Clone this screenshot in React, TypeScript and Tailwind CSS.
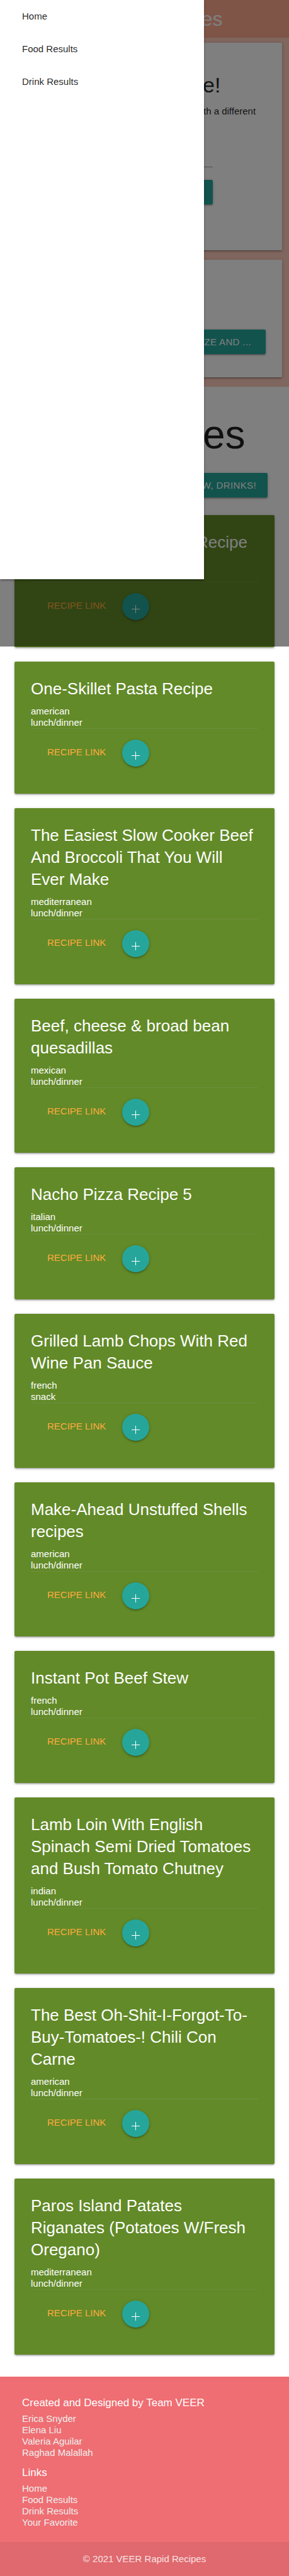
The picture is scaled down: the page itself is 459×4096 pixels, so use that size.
import { Menu } from "lucide-react";

type Recipe = { title: string; cuisine: string; meal: string };

const recipes: Recipe[] = [
  { title: "Easy Cheese Chicken Recipe", cuisine: "american", meal: "lunch/dinner" },
  { title: "One-Skillet Pasta Recipe", cuisine: "american", meal: "lunch/dinner" },
  { title: "The Easiest Slow Cooker Beef And Broccoli That You Will Ever Make", cuisine: "mediterranean", meal: "lunch/dinner" },
  { title: "Beef, cheese & broad bean quesadillas", cuisine: "mexican", meal: "lunch/dinner" },
  { title: "Nacho Pizza Recipe 5", cuisine: "italian", meal: "lunch/dinner" },
  { title: "Grilled Lamb Chops With Red Wine Pan Sauce", cuisine: "french", meal: "snack" },
  { title: "Make-Ahead Unstuffed Shells recipes", cuisine: "american", meal: "lunch/dinner" },
  { title: "Instant Pot Beef Stew", cuisine: "french", meal: "lunch/dinner" },
  { title: "Lamb Loin With English Spinach Semi Dried Tomatoes and Bush Tomato Chutney", cuisine: "indian", meal: "lunch/dinner" },
  { title: "The Best Oh-Shit-I-Forgot-To-Buy-Tomatoes-! Chili Con Carne", cuisine: "american", meal: "lunch/dinner" },
  { title: "Paros Island Patates Riganates (Potatoes W/Fresh Oregano)", cuisine: "mediterranean", meal: "lunch/dinner" },
];

const team = ["Erica Snyder", "Elena Liu", "Valeria Aguilar", "Raghad Malallah"];
const footerLinks = ["Home", "Food Results", "Drink Results", "Your Favorite"];
const navLinks = ["Home", "Food Results", "Drink Results"];

const raised =
  "shadow-[0_2px_2px_0_rgba(0,0,0,0.14),0_3px_1px_-2px_rgba(0,0,0,0.12),0_1px_5px_0_rgba(0,0,0,0.2)]";
const button = `h-[39px] rounded-xs bg-[#26a69a] tracking-wide text-white uppercase ${raised}`;

function PlusIcon() {
  return (
    <svg viewBox="0 0 13 13" className="size-[13px]" stroke="white" strokeWidth="1" aria-hidden="true">
      <path d="M0 6.5H13M6.5 0V13" />
    </svg>
  );
}

function RecipeCard({ recipe }: { recipe: Recipe }) {
  return (
    <article className={`rounded-xs bg-[#628a28] p-[26px] text-white ${raised}`}>
      <h2 className="mb-[9px] text-[26px] leading-[35px]">{recipe.title}</h2>
      <p>{recipe.cuisine}</p>
      <p>{recipe.meal}</p>
      <div className="flex gap-[26px] border-t border-[#a0a0a0]/20 py-[17px] pl-[26px]">
        <a href="#recipe" className="leading-[39px] text-[#ffab40] uppercase">
          Recipe Link
        </a>
        <button
          type="button"
          aria-label={`Save ${recipe.title}`}
          className={`flex size-[43px] items-center justify-center rounded-full bg-[#26a69a] pt-2 ${raised}`}
        >
          <PlusIcon />
        </button>
      </div>
    </article>
  );
}

function LinkList({ items }: { items: string[] }) {
  return (
    <ul className="text-[#eeeeee]">
      {items.map((item) => (
        <li key={item}>
          <a href="#top">{item}</a>
        </li>
      ))}
    </ul>
  );
}

export default function App() {
  return (
    <div className="relative bg-white font-['Liberation_Sans',Arial,sans-serif] text-[15px] leading-[18px] text-black/87">
      <header className="flex h-[60px] items-center bg-[#ffab91] text-white">
        <button type="button" aria-label="Open menu" className="flex w-10 justify-center">
          <Menu className="size-5" />
        </button>
        <h1 className="flex-1 text-center text-[32px] leading-[36px]">Rapid Recipes</h1>
      </header>

      <section className="flex flex-col gap-[15px] bg-[#ffccbc] px-[11px] pt-2 pb-[15px]">
        <div className={`rounded-xs bg-white px-[26px] pt-12 pb-[73px] ${raised}`}>
          <h2 className="text-center text-[34px] leading-[38px]">Choose Recipe!</h2>
          <p className="mt-[14px]">
            Type an ingredient to get recipes started with a different
            <br />
            flavor each day.
          </p>
          <form className="mx-auto mt-[17px] w-[217px]">
            <input
              type="text"
              aria-label="Ingredient"
              className="block h-[45px] w-full border-b border-[#9e9e9e] outline-none"
            />
            <button type="button" className={`mt-5 block w-full ${button}`}>
              Search
            </button>
          </form>
        </div>
        <div className={`rounded-xs bg-white px-[26px] pt-12 pb-[37px] ${raised}`}>
          <h3 className="mb-7 text-[26px] leading-[35px]">Feeling lucky?</h3>
          <button type="button" className={`block w-full pr-[23px] text-right ${button}`}>
            Let us randomize and ...
          </button>
        </div>
      </section>

      <main className="px-[23px] pt-[41px] pb-[35px]">
        <h2 className="text-center text-[64px] leading-[70px]">All Recipes</h2>
        <div className="mt-[26px] mb-7 flex justify-end pr-[11px]">
          <button type="button" className={`px-[18px] ${button}`}>
            Now, drinks!
          </button>
        </div>
        <div className="flex flex-col gap-[23px]">
          {recipes.map((recipe) => (
            <RecipeCard key={recipe.title} recipe={recipe} />
          ))}
        </div>
      </main>

      <footer className="bg-[#ee6e73]">
        <div className="px-[35px] pt-[29px] pb-[22px]">
          <h5 className="mb-1 text-[17px] leading-[25px] text-white">Created and Designed by Team VEER</h5>
          <LinkList items={team} />
          <h5 className="mt-[10px] mb-1 text-[17px] leading-[25px] text-white">Links</h5>
          <LinkList items={footerLinks} />
        </div>
        <div className="bg-[#333333]/8 text-center leading-[54px] text-white/80">© 2021 VEER Rapid Recipes</div>
      </footer>

      <div className="absolute inset-x-0 top-0 h-[1028px] bg-black/50" />
      <nav className={`absolute top-0 left-0 h-[921px] w-[324px] bg-white ${raised}`}>
        <ul>
          {navLinks.map((label) => (
            <li key={label}>
              <a href="#top" className="flex h-[52px] items-center px-[35px]">
                {label}
              </a>
            </li>
          ))}
        </ul>
      </nav>
    </div>
  );
}
